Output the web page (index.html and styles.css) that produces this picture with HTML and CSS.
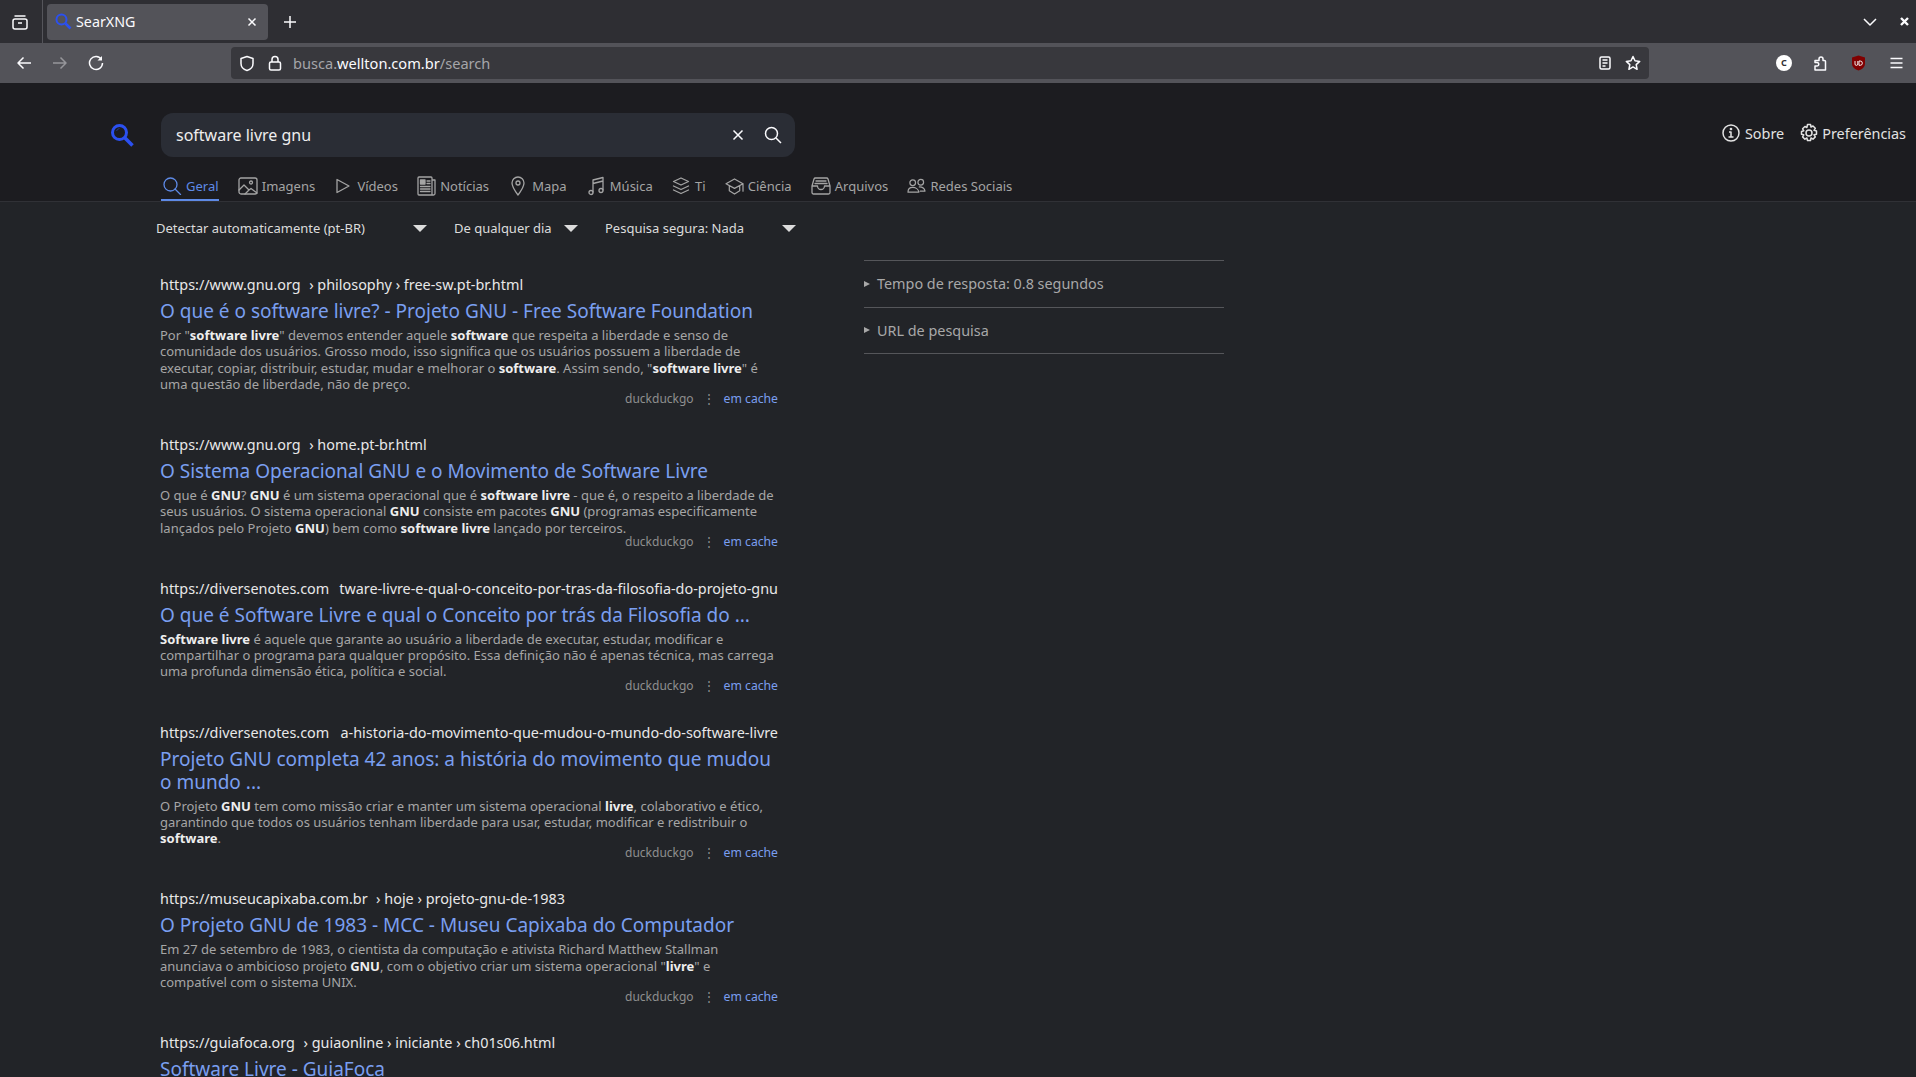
FILE: index.html
```html
<!DOCTYPE html>
<html lang="pt-BR">

<head>
    <meta charset="UTF-8">
    <title>SearXNG</title>
    <link rel="stylesheet" href="styles.css">
</head>

<body>

<div class="tabbar">
    <div class="tab-side">
        <svg class="ico" width="18" height="18" viewBox="0 0 18 18"><rect x="2" y="6" width="14" height="10" rx="2"/><path d="M3.5 3h11M7 10h4"/></svg>
    </div>
    <div class="tab">
        <svg width="17" height="17" viewBox="0 0 17 17" fill="none" stroke="#2b50f0"><circle cx="6.5" cy="6.5" r="5" stroke-width="2"/><path d="M10.5 10.5l5 5" stroke-width="2.6"/></svg>
        <span class="tab-title">SearXNG</span>
        <svg class="ico" width="10" height="10" viewBox="0 0 10 10"><path d="M1.5 1.5l7 7M8.5 1.5l-7 7"/></svg>
    </div>
    <svg class="ico newtab" width="14" height="14" viewBox="0 0 14 14"><path d="M7 1v12M1 7h12"/></svg>
    <div class="tab-right">
        <svg class="ico" width="14" height="8" viewBox="0 0 14 8"><path d="M1 1l6 6 6-6"/></svg>
        <svg class="ico closewin" width="9" height="9" viewBox="0 0 9 9"><path d="M1 1l7 7M8 1l-7 7"/></svg>
    </div>
</div>

<div class="navbar">
    <div class="nav-buttons">
        <svg class="ico" width="16" height="14" viewBox="0 0 16 14"><path d="M15 7H2M7.5 1.5L2 7l5.500 5.500"/></svg>
        <svg class="ico dim" width="16" height="14" viewBox="0 0 16 14"><path d="M1 7h13M8.500 1.500L14 7l-5.500 5.500"/></svg>
        <svg class="ico" width="16" height="16" viewBox="0 0 16 16"><path d="M13.500 4.500A6.500 6.500 0 1 0 14.500 8"/><path d="M14 1v4.500H9.500" fill="#fbfbfe" stroke="none"/></svg>
    </div>
    <div class="urlbar">
        <svg class="ico" width="16" height="17" viewBox="0 0 16 17"><path d="M8 1.500l6 2v5c0 3.500-2.500 6-6 7-3.500-1-6-3.500-6-7v-5z"/></svg>
        <svg class="ico lock" width="14" height="16" viewBox="0 0 14 16"><rect x="1.500" y="7" width="11" height="8" rx="1.500"/><path d="M4 7V4.500a3 3 0 0 1 6 0V7"/></svg>
        <span class="url"><span class="url-dim">busca.</span>wellton.com.br<span class="url-dim">/search</span></span>
        <svg class="ico reader" width="12" height="14" viewBox="0 0 12 14"><rect x="1" y="1" width="10" height="12" rx="1.500"/><path d="M3.500 4h5M3.500 7h5M3.500 10h3"/></svg>
        <svg class="ico" width="16" height="16" viewBox="0 0 16 16"><path d="M8 1.500l2 4.300 4.700.6-3.500 3.200.9 4.700L8 11.900l-4.100 2.400.9-4.700L1.300 6.400 6 5.800z"/></svg>
    </div>
    <div class="nav-right">
        <span class="ext-c">C</span>
        <svg class="ico" width="15" height="16" viewBox="0 0 15 16"><path d="M1 5.500h4V4a2 2 0 0 1 4 0v1.500h1.500a1 1 0 0 1 1 1V15H1v-4h2a1.700 1.700 0 0 0 0-3.500H1z"/></svg>
        <svg class="ext-ubo" width="15" height="16" viewBox="0 0 15 16"><path d="M7.500 0.500l6.500 2v6c0 3.500-3 6-6.500 7-3.500-1-6.500-3.500-6.500-7v-6z" fill="#800000"/><path d="M4 6v3a1.300 1.300 0 0 0 2.800 0V6M8 6v4.300h1.200a2.100 2.100 0 0 0 0-4.300z" fill="none" stroke="#fff" stroke-width=".9"/></svg>
        <svg class="ico" width="13" height="12" viewBox="0 0 13 12"><path d="M0.500 1.500h12M0.500 6h12M0.500 10.500h12"/></svg>
    </div>
</div>

<div class="page">
    <header class="head">
        <div class="head-top">
            <svg class="logo" width="24" height="24" viewBox="0 0 24 24" fill="none" stroke="#2b50f0"><circle cx="9.500" cy="9.500" r="7" stroke-width="3"/><path d="M6.500 8a4 4 0 0 1 3-2.500" stroke-width="1" opacity=".5"/><path d="M15 15l7.500 7.500" stroke-width="3.600"/></svg>
            <div class="searchbox">
                <span class="query">software livre gnu</span>
                <svg class="ico" width="12" height="12" viewBox="0 0 12 12"><path d="M1.500 1.500l9 9M10.500 1.500l-9 9"/></svg>
                <svg class="ico" width="18" height="18" viewBox="0 0 18 18"><circle cx="7.500" cy="7.500" r="6"/><path d="M12 12l5 5"/></svg>
            </div>
            <nav class="links">
                <a class="toplink">
                    <svg class="ico" width="18" height="18" viewBox="0 0 18 18"><circle cx="9" cy="9" r="8"/><path d="M7 8h2v5M6.500 13h5"/><circle cx="9" cy="5" r=".6"/></svg>
                    Sobre
                </a>
                <a class="toplink">
                    <svg class="ico" width="20" height="20" viewBox="0 0 20 20"><circle cx="10" cy="10" r="3"/><path d="M8.500 1.500h3l.5 2.500 2-1 2.300 2.300-1.300 2 2.500.7v3.200l-2.500.6 1.300 2.100-2.300 2.300-2-1.200-.5 2.500h-3l-.6-2.500-2 1.200-2.300-2.300 1.200-2.100-2.300-.6V8.500l2.300-.7-1.200-2 2.300-2.300 2 1z"/></svg>
                    Preferências
                </a>
            </nav>
        </div>
        <div class="cats">
            <a class="cat cat-active">
                <svg class="cat-ico" width="21" height="18" viewBox="-2 0 21 18"><circle cx="7.500" cy="7.500" r="6.500"/><path d="M12 12l5.500 5.500"/></svg>
                Geral
            </a>
            <a class="cat">
                <svg class="cat-ico" width="20" height="18" viewBox="0 0 20 18"><rect x="1" y="1" width="18" height="16" rx="2"/><circle cx="13" cy="5.500" r="1.500"/><path d="M1 13l5-5 5 5 2-1.500 6 4.500M7 17l4-4"/></svg>
                Imagens
            </a>
            <a class="cat">
                <svg class="cat-ico" width="19" height="16" viewBox="-2 0 19 16"><path d="M1 1.500v13L13 8z"/></svg>
                Vídeos
            </a>
            <a class="cat">
                <svg class="cat-ico" width="19" height="20" viewBox="0 0 19 20"><path d="M15 3.500V2a1 1 0 0 0-1-1H2a1 1 0 0 0-1 1v16a1 1 0 0 0 1 1h14.500a1.500 1.500 0 0 0 1.500-1.500V4h-3v14"/><rect x="3.500" y="4" width="4.500" height="4" fill="currentColor"/><path d="M10 5h3M10 7.500h3M3.500 10.500h9.500M3.500 13h9.500M3.500 15.500h9.500"/></svg>
                Notícias
            </a>
            <a class="cat">
                <svg class="cat-ico" width="20" height="20" viewBox="-3 0 20 20"><path d="M7 1a6 6 0 0 0-6 6c0 4 6 12 6 12s6-8 6-12a6 6 0 0 0-6-6z"/><circle cx="7" cy="7" r="2"/></svg>
                Mapa
            </a>
            <a class="cat">
                <svg class="cat-ico" width="20" height="20" viewBox="-2 0 20 20"><path d="M5 16V4l10-2.500V14M5 7.500l10-2.500"/><circle cx="3" cy="16.500" r="2"/><circle cx="13" cy="14.500" r="2"/></svg>
                Música
            </a>
            <a class="cat">
                <svg class="cat-ico" width="19" height="18" viewBox="0 0 19 18"><path d="M9 1L1.500 4.500 9 8l7.500-3.500zM1.500 9L9 12.500 16.500 9M1.500 13L9 16.500 16.500 13"/></svg>
                Ti
            </a>
            <a class="cat">
                <svg class="cat-ico" width="19" height="17" viewBox="0 0 20 18"><path d="M10 1L1 6l9 5 9-5zM4.500 8.500v5L10 17l5.500-3.500v-5M19 6v8"/></svg>
                Ciência
            </a>
            <a class="cat">
                <svg class="cat-ico" width="20" height="18" viewBox="0 0 20 18"><path d="M1 9l2-7a1.500 1.500 0 0 1 1.500-1h11A1.500 1.500 0 0 1 17 2l2 7v6.500a1.500 1.500 0 0 1-1.500 1.500h-15A1.500 1.500 0 0 1 1 15.500zM1 9h5.500a3.500 3.500 0 0 0 7 0H19M5 4h10M4 6.500h12"/></svg>
                Arquivos
            </a>
            <a class="cat">
                <svg class="cat-ico" width="19" height="17" viewBox="0 0 20 18"><circle cx="6" cy="5" r="3"/><circle cx="14.500" cy="4.500" r="3"/><path d="M1 15c0-3 2-5 5-5s6 2 6.500 5zM13 9.500c3 0 5.500 1.500 6 4.500h-5"/></svg>
                Redes Sociais
            </a>
        </div>
    </header>

    <div class="filters">
        <div class="filter filter-lang">Detectar automaticamente (pt-BR)<span class="caret"></span></div>
        <div class="filter filter-time">De qualquer dia<span class="caret"></span></div>
        <div class="filter filter-safe">Pesquisa segura: Nada<span class="caret"></span></div>
    </div>

    <div class="columns">
        <main class="results">
            <article class="result">
                <div class="res-url"><span>https://www.gnu.org</span><span class="res-path">› philosophy › free-sw.pt-br.html</span></div>
                <h3><a>O que é o software livre? - Projeto GNU - Free Software Foundation</a></h3>
                <p>Por "<b>software livre</b>" devemos entender aquele <b>software</b> que respeita a liberdade e senso de comunidade dos usuários. Grosso modo, isso significa que os usuários possuem a liberdade de executar, copiar, distribuir, estudar, mudar e melhorar o <b>software</b>. Assim sendo, "<b>software livre</b>" é uma questão de liberdade, não de preço.</p>
                <div class="res-foot"><span>duckduckgo</span><span class="dots">⋮</span><a>em cache</a></div>
            </article>
            <article class="result">
                <div class="res-url"><span>https://www.gnu.org</span><span class="res-path">› home.pt-br.html</span></div>
                <h3><a>O Sistema Operacional GNU e o Movimento de Software Livre</a></h3>
                <p>O que é <b>GNU</b>? <b>GNU</b> é um sistema operacional que é <b>software livre</b> - que é, o respeito a liberdade de seus usuários. O sistema operacional <b>GNU</b> consiste em pacotes <b>GNU</b> (programas especificamente lançados pelo Projeto <b>GNU</b>) bem como <b>software livre</b> lançado por terceiros.</p>
                <div class="res-foot"><span>duckduckgo</span><span class="dots">⋮</span><a>em cache</a></div>
            </article>
            <article class="result">
                <div class="res-url"><span>https://diversenotes.com</span><span class="res-path res-path-long">tware-livre-e-qual-o-conceito-por-tras-da-filosofia-do-projeto-gnu</span></div>
                <h3><a>O que é Software Livre e qual o Conceito por trás da Filosofia do ...</a></h3>
                <p><b>Software livre</b> é aquele que garante ao usuário a liberdade de executar, estudar, modificar e compartilhar o programa para qualquer propósito. Essa definição não é apenas técnica, mas carrega uma profunda dimensão ética, política e social.</p>
                <div class="res-foot"><span>duckduckgo</span><span class="dots">⋮</span><a>em cache</a></div>
            </article>
            <article class="result">
                <div class="res-url"><span>https://diversenotes.com</span><span class="res-path res-path-long">a-historia-do-movimento-que-mudou-o-mundo-do-software-livre</span></div>
                <h3><a>Projeto GNU completa 42 anos: a história do movimento que mudou o mundo ...</a></h3>
                <p>O Projeto <b>GNU</b> tem como missão criar e manter um sistema operacional <b>livre</b>, colaborativo e ético, garantindo que todos os usuários tenham liberdade para usar, estudar, modificar e redistribuir o <b>software</b>.</p>
                <div class="res-foot"><span>duckduckgo</span><span class="dots">⋮</span><a>em cache</a></div>
            </article>
            <article class="result">
                <div class="res-url"><span>https://museucapixaba.com.br</span><span class="res-path">› hoje › projeto-gnu-de-1983</span></div>
                <h3><a>O Projeto GNU de 1983 - MCC - Museu Capixaba do Computador</a></h3>
                <p>Em 27 de setembro de 1983, o cientista da computação e ativista Richard Matthew Stallman anunciava o ambicioso projeto <b>GNU</b>, com o objetivo criar um sistema operacional "<b>livre</b>" e compatível com o sistema UNIX.</p>
                <div class="res-foot"><span>duckduckgo</span><span class="dots">⋮</span><a>em cache</a></div>
            </article>
            <article class="result">
                <div class="res-url"><span>https://guiafoca.org</span><span class="res-path">› guiaonline › iniciante › ch01s06.html</span></div>
                <h3><a>Software Livre - GuiaFoca</a></h3>
            </article>
        </main>
        <aside class="sidebar">
            <div class="side-row"><span class="side-arrow"></span>Tempo de resposta: 0.8 segundos</div>
            <div class="side-row"><span class="side-arrow"></span>URL de pesquisa</div>
        </aside>
    </div>
</div>

</body>
</html>
```

FILE: styles.css
```css
* {
    box-sizing: border-box;
}

html, body {
    height: 100%;
}

body {
    margin: 0;
    font-family: 'Noto Sans', sans-serif;
    background-color: #222428;
    color: #c8c8c8;
    overflow: hidden;
    display: flex;
    flex-direction: column;
}

svg {
    flex: none;
}

.ico {
    fill: none;
    stroke: #fbfbfe;
    stroke-width: 1.5;
    stroke-linejoin: round;
}

.dim {
    opacity: 0.4;
}

/* browser chrome */
.tabbar {
    height: 43px;
    flex: none;
    background-color: #2e2e33;
    display: flex;
    align-items: center;
}

.tab-side {
    width: 43px;
    height: 43px;
    padding-left: 11px;
    display: flex;
    align-items: center;
    border-right: 1px solid #55555b;
}

.tab {
    width: 221px;
    height: 36px;
    margin-left: 4px;
    padding: 0 11px 0 8px;
    border-radius: 4px;
    background-color: #535359;
    display: flex;
    align-items: center;
    gap: 4px;
}

.tab-title {
    flex: 1;
    font-size: 14.300px;
    color: #fbfbfe;
}

.newtab {
    margin-left: 15px;
}

.tab-right {
    margin-left: auto;
    padding-right: 7px;
    display: flex;
    align-items: center;
}

.closewin {
    margin-left: 23px;
    stroke-width: 2.4;
}

.navbar {
    height: 40px;
    flex: none;
    background-color: #535359;
    display: flex;
    align-items: center;
}

.nav-buttons {
    width: 231px;
    padding-left: 16px;
    display: flex;
    align-items: center;
    gap: 20px;
}

.urlbar {
    width: 1418px;
    height: 32px;
    padding: 0 8px 0 8px;
    border-radius: 4px;
    background-color: #38383d;
    display: flex;
    align-items: center;
}

.lock {
    margin-left: 13px;
}

.url {
    flex: 1;
    margin-left: 11px;
    font-size: 14.600px;
    color: #fbfbfe;
}

.url-dim {
    color: #a5a5a9;
}

.reader {
    margin-right: 14px;
}

.nav-right {
    flex: 1;
    padding: 0 13px 0 127px;
    display: flex;
    align-items: center;
    justify-content: space-between;
}

.ext-c {
    width: 16px;
    height: 16px;
    border-radius: 50%;
    background-color: #fff;
    color: #333;
    font-size: 9px;
    font-weight: 700;
    line-height: 16px;
    text-align: center;
}

.ext-ubo {
    margin-right: 2px;
}

/* searxng */
.page {
    flex: 1;
    min-height: 0;
}

.head {
    background-color: #1c1c20;
    border-bottom: 1px solid #303136;
}

.head-top {
    height: 87px;
    padding: 30px 10px 0 110px;
    display: flex;
    align-items: flex-start;
}

.logo {
    margin-top: 10px;
}

.searchbox {
    width: 634px;
    height: 44px;
    margin-left: 27px;
    padding: 0 13px 0 15px;
    border-radius: 12px;
    background-color: #2a2d35;
    display: flex;
    align-items: center;
    gap: 20px;
}

.query {
    flex: 1;
    font-size: 16px;
    color: #eee;
}

.links {
    margin-left: auto;
    padding-top: 10px;
    display: flex;
    gap: 15px;
}

.toplink {
    display: flex;
    align-items: center;
    gap: 5px;
    font-size: 14.400px;
    color: #e2e2e2;
}

.toplink .ico {
    stroke: #e2e2e2;
}

.toplink + .toplink {
    gap: 3px;
}

.cats {
    height: 31px;
    padding-left: 161px;
    display: flex;
    gap: 19.200px;
}

.cat {
    height: 31px;
    padding-top: 1px;
    display: flex;
    align-items: center;
    gap: 4px;
    font-size: 13px;
    color: #a4a4a4;
}

.cat-ico {
    fill: none;
    stroke: currentColor;
    stroke-width: 1.300;
    stroke-linejoin: round;
    stroke-linecap: round;
}

.cat-active {
    color: #5e8ae6;
    border-bottom: 2px solid #5e8ae6;
    padding-top: 3px;
}

.filters {
    height: 52px;
    padding-left: 156px;
    display: flex;
    align-items: center;
    font-size: 13px;
    color: #dcdcdc;
}

.filter {
    display: flex;
    align-items: center;
    justify-content: space-between;
}

.filter-lang {
    width: 271px;
}

.filter-time {
    width: 124px;
    margin-left: 27px;
}

.filter-safe {
    width: 191px;
    margin-left: 27px;
}

.caret {
    width: 0;
    height: 0;
    border-left: 7px solid transparent;
    border-right: 7px solid transparent;
    border-top: 7px solid #dcdcdc;
}

.columns {
    padding: 6px 0 0 160px;
    display: flex;
    align-items: flex-start;
}

.results {
    width: 618px;
    margin-top: 14px;
}

.result {
    margin-bottom: 30px;
}

.res-url {
    display: flex;
    height: 21px;
    padding-top: 1px;
    line-height: 20px;
    font-size: 14.400px;
    color: #e8e8e8;
    white-space: nowrap;
    overflow: hidden;
}

.res-url span:first-child {
    flex: none;
}

.res-path {
    flex: 1;
    min-width: 0;
    margin-left: 8.500px;
}

.res-path-long {
    text-align: right;
}

.result h3 {
    margin: 5px 0 0;
    font-size: 19px;
    font-weight: 400;
    line-height: 23px;
    color: #7a9ff0;
}

.result p {
    margin: 4px 0 0;
    font-size: 13px;
    line-height: 16.250px;
    color: #a6a6a6;
}

.result b {
    color: #eee;
    font-weight: 700;
}

.res-foot {
    height: 12px;
    display: flex;
    align-items: center;
    justify-content: flex-end;
    font-size: 12px;
    color: #8f8f8f;
}

.res-foot a {
    font-size: 12.200px;
    color: #7a9ff0;
}

.dots {
    margin: 0 9px;
}

.sidebar {
    width: 360px;
    margin-left: 86px;
    border-top: 1px solid #55565a;
    flex: none;
}

.side-row {
    height: 46.500px;
    display: flex;
    align-items: center;
    gap: 7px;
    border-bottom: 1px solid #55565a;
    font-size: 14.400px;
    color: #a8a8a8;
}

.side-arrow {
    width: 0;
    height: 0;
    border-top: 3.500px solid transparent;
    border-bottom: 3.500px solid transparent;
    border-left: 6px solid #a8a8a8;
}
```
